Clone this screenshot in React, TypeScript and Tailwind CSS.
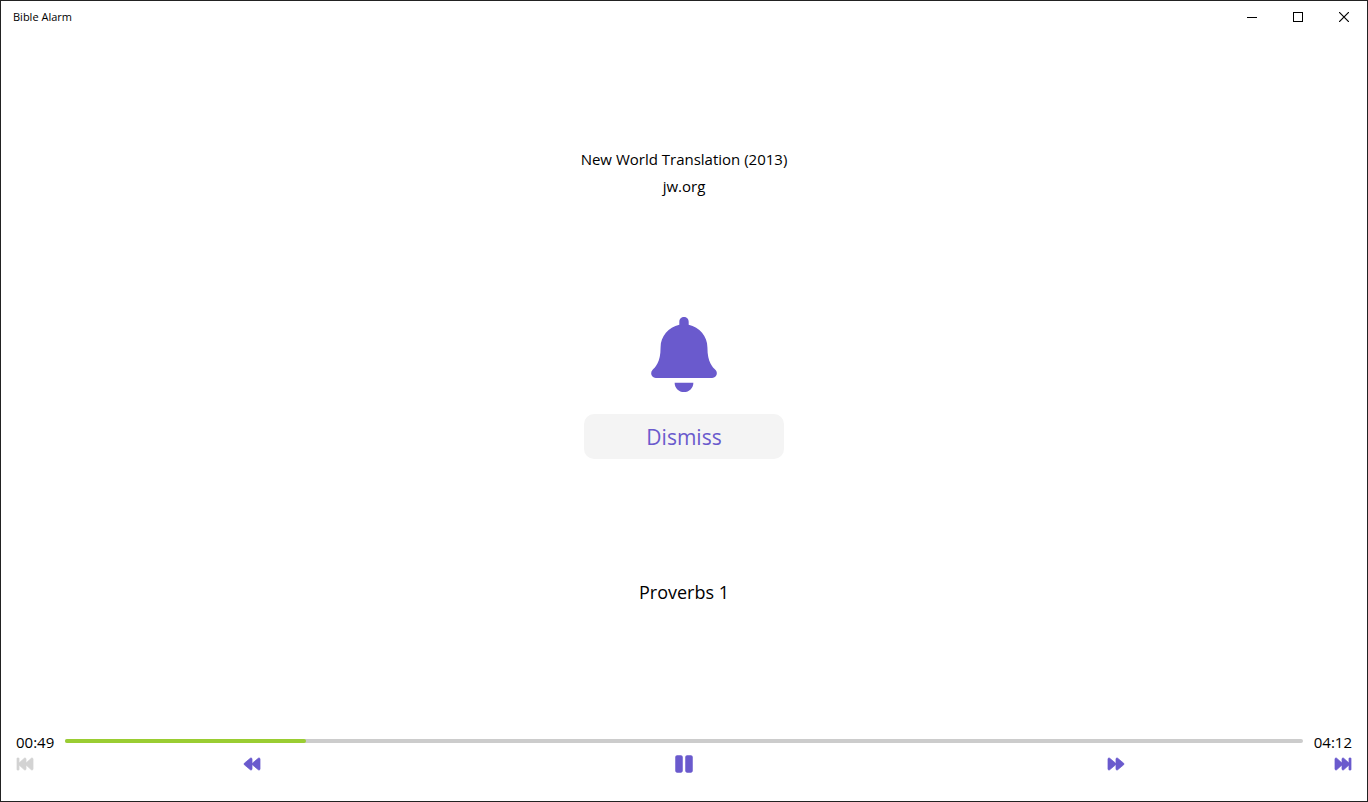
import { useState } from "react";
import {
  FaBackward,
  FaBell,
  FaFastBackward,
  FaFastForward,
  FaForward,
  FaPause,
  FaPlay,
} from "react-icons/fa";

const DURATION = 252;

function formatTime(seconds: number) {
  const minutes = Math.floor(seconds / 60);
  const rest = seconds % 60;
  return `${String(minutes).padStart(2, "0")}:${String(rest).padStart(2, "0")}`;
}

function TitleBar() {
  return (
    <header className="flex h-8 items-stretch justify-between">
      <h1 className="flex items-center pl-3 text-[11px]">Bible Alarm</h1>
      <div className="flex">
        <button type="button" aria-label="Minimize" className="flex w-[46px] items-center justify-center hover:bg-gray-200">
          <svg width="10" height="10" viewBox="0 0 10 10" shapeRendering="crispEdges">
            <rect x="0" y="5" width="10" height="1" />
          </svg>
        </button>
        <button type="button" aria-label="Maximize" className="flex w-[46px] items-center justify-center hover:bg-gray-200">
          <svg width="10" height="10" viewBox="0 0 10 10" fill="none" stroke="black">
            <rect x="0.5" y="0.5" width="9" height="9" />
          </svg>
        </button>
        <button type="button" aria-label="Close" className="flex w-[46px] items-center justify-center hover:bg-red-600">
          <svg width="10" height="10" viewBox="0 0 10 10" fill="none" stroke="black" strokeWidth="1.2">
            <path d="M0 0 10 10M10 0 0 10" />
          </svg>
        </button>
      </div>
    </header>
  );
}

const skipIcon = "size-4 overflow-visible stroke-[24px]";

function Player() {
  const [position, setPosition] = useState(49);
  const [playing, setPlaying] = useState(true);
  const seek = (value: number) => setPosition(Math.min(DURATION, Math.max(0, value)));

  return (
    <footer className="px-[15px] pb-[27px]">
      <div className="flex items-center gap-[11px]">
        <span className="text-[15px] leading-6">{formatTime(position)}</span>
        <div className="relative mb-[2px] h-1 flex-1 rounded-full bg-[#cccccc]">
          <div
            className="h-1 rounded-full bg-[#9acd32]"
            style={{ width: `${(position / DURATION) * 100}%` }}
          />
          <input
            type="range"
            aria-label="Playback position"
            min={0}
            max={DURATION}
            value={position}
            onChange={(e) => seek(Number(e.target.value))}
            className="absolute inset-0 w-full cursor-pointer opacity-0"
          />
        </div>
        <span className="text-[15px] leading-6">{formatTime(DURATION)}</span>
      </div>
      <div className="grid h-5 grid-cols-[20px_1fr_1fr_1fr_20px] items-center text-[#6a5acd]">
        <button type="button" disabled aria-label="Previous chapter" className="justify-self-start px-px text-[#d3d3d3]">
          <FaFastBackward className={skipIcon} />
        </button>
        <button type="button" aria-label="Rewind" className="justify-self-center" onClick={() => seek(position - 10)}>
          <FaBackward className={skipIcon} />
        </button>
        <button
          type="button"
          aria-label={playing ? "Pause" : "Play"}
          className="justify-self-center"
          onClick={() => setPlaying(!playing)}
        >
          {playing ? <FaPause size={20} /> : <FaPlay size={20} />}
        </button>
        <button type="button" aria-label="Fast forward" className="justify-self-center" onClick={() => seek(position + 10)}>
          <FaForward className={skipIcon} />
        </button>
        <button type="button" aria-label="Next chapter" className="justify-self-end px-px">
          <FaFastForward className={skipIcon} />
        </button>
      </div>
    </footer>
  );
}

export default function App() {
  return (
    <div className="flex min-h-screen flex-col border border-[#222222] bg-white font-['Open_Sans','Noto_Sans',sans-serif] text-black">
      <TitleBar />
      <main className="grid flex-1 grid-rows-[17fr_auto_16fr] justify-items-center pb-1">
        <div className="self-center pb-1 text-center text-[15px] leading-[27px]">
          <p>New World Translation (2013)</p>
          <p>jw.org</p>
        </div>
        <div className="flex flex-col items-center gap-[22px]">
          <FaBell className="h-[75px] w-[66px] text-[#6a5acd]" />
          <button
            type="button"
            className="h-[45px] w-[200px] rounded-[10px] bg-[#f4f4f4] pt-[2px] text-[21px] text-[#6a5acd] hover:bg-gray-200"
          >
            Dismiss
          </button>
        </div>
        <h2 className="self-center text-[18px] leading-6">Proverbs 1</h2>
      </main>
      <Player />
    </div>
  );
}
